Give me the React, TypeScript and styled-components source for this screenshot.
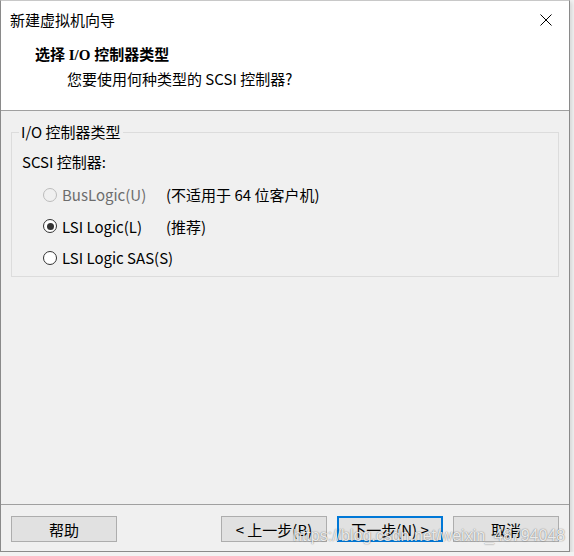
import styled, { createGlobalStyle } from "styled-components";

interface IOption {
    label: string,
    note?: string,
    checked?: boolean,
    disabled?: boolean
}

interface IRadio {
    checked?: boolean;
    disabled?: boolean;
}

const options: IOption[] = [
    { label: "BusLogic(U)", note: "(不适用于 64 位客户机)", disabled: true },
    { label: "LSI Logic(L)", note: "(推荐)", checked: true },
    { label: "LSI Logic SAS(S)" },
];

const GlobalStyle = createGlobalStyle`
    body {
        margin: 0;
        background: #f2f2f2;
        font-family: "Noto Sans CJK SC", "Noto Sans", sans-serif;
        font-size: 15px;
        color: #000;
    }
`;

export default function App() {
    return (
        <>
            <GlobalStyle />
            <Window>
                <TitleBar>
                    <span className="caption">新建虚拟机向导</span>
                    <CloseButton>
                        <svg width="12" height="12" viewBox="0 0 12 12">
                            <path d="M0.5 0.5 L11.5 11.5 M11.5 0.5 L0.5 11.5" stroke="#000" strokeWidth="1" fill="none" />
                        </svg>
                    </CloseButton>
                </TitleBar>
                <Header>
                    <h1 className="heading">选择 I/O 控制器类型</h1>
                    <p className="sub">您要使用何种类型的 SCSI 控制器?</p>
                </Header>
                <Content>
                    <Group>
                        <legend>I/O 控制器类型</legend>
                        <div className="caption">SCSI 控制器:</div>
                        {options.map((item) => (
                            <Row key={item.label} disabled={item.disabled}>
                                <div className="choice">
                                    <Radio checked={item.checked} disabled={item.disabled} />
                                    <span className="label">{item.label}</span>
                                </div>
                                {item.note && <span className="note">{item.note}</span>}
                            </Row>
                        ))}
                    </Group>
                </Content>
                <Footer>
                    <Button>帮助</Button>
                    <div className="right">
                        <Button>&lt; 上一步(B)</Button>
                        <Button primary>下一步(N) &gt;</Button>
                        <Button>取消</Button>
                    </div>
                </Footer>
                <Watermark>https://blog.csdn.net/weixin_48794048</Watermark>
            </Window>
        </>
    );
}

const Window = styled.div`
    position: relative;
    box-sizing: border-box;
    width: 570px;
    height: 552px;
    display: flex;
    flex-direction: column;
    background: #f0f0f0;
    border: 1px solid #8a8a8a;
    border-top-color: #c8c8c8;
    box-shadow: 2px 2px 4px rgba(0, 0, 0, 0.12);
`;

const TitleBar = styled.div`
    height: 38px;
    display: flex;
    align-items: center;
    justify-content: space-between;
    background: #fff;

    .caption {
        padding-left: 9px;
        font-size: 15px;
        line-height: 20px;
    }
`;

const CloseButton = styled.div`
    width: 46px;
    height: 38px;
    display: flex;
    align-items: center;
    justify-content: center;
`;

const Header = styled.div`
    height: 72px;
    box-sizing: border-box;
    padding-top: 6px;
    background: #fff;
    border-bottom: 1px solid #a0a0a0;

    .heading {
        margin: 0 0 4px 34px;
        font-family: "Liberation Serif", "Noto Sans CJK SC", serif;
        font-size: 15px;
        font-weight: 700;
        line-height: 20px;
    }

    .sub {
        margin: 0 0 0 66px;
        font-size: 15px;
        line-height: 20px;
    }
`;

const Content = styled.div`
    flex: 1;
    padding: 11px 10px 0 10px;
`;

const Group = styled.fieldset`
    margin: 0;
    padding: 10px 10px 2px 10px;
    border: 1px solid #dcdcdc;

    legend {
        margin-left: -3px;
        padding: 0 2px;
        line-height: 20px;
    }

    .caption {
        line-height: 20px;
        margin-bottom: 7px;
    }
`;

const Row = styled.div<IRadio>`
    height: 31.5px;
    display: flex;
    align-items: center;

    .choice {
        width: 144px;
        display: flex;
        align-items: center;
        padding-left: 21px;
        box-sizing: border-box;
        flex-shrink: 0;
    }

    .label {
        margin-left: 5px;
        color: ${props => props.disabled ? "#6d6d6d" : "#000"};
        white-space: nowrap;
    }

    .note {
        white-space: nowrap;
    }
`;

const Radio = styled.span<IRadio>`
    position: relative;
    box-sizing: border-box;
    width: 14px;
    height: 14px;
    border-radius: 50%;
    border: 1px solid ${props => props.disabled ? "#bcbcbc" : "#333"};
    background: ${props => props.disabled ? "#f0f0f0" : "#fff"};
    flex-shrink: 0;

    &::after {
        content: "";
        display: ${props => props.checked ? "block" : "none"};
        position: absolute;
        left: 2.5px;
        top: 2.5px;
        width: 7px;
        height: 7px;
        border-radius: 50%;
        background: #333;
    }
`;

const Footer = styled.div`
    height: 47px;
    box-sizing: border-box;
    padding: 11px 10px 0 10px;
    border-top: 1px solid #a0a0a0;
    display: flex;
    justify-content: space-between;
    align-items: flex-start;

    .right {
        display: flex;
        gap: 10px;
    }
`;

const Button = styled.div<{ primary?: boolean }>`
    box-sizing: border-box;
    width: 106px;
    height: 26px;
    display: flex;
    align-items: center;
    justify-content: center;
    background: #e1e1e1;
    border: ${props => props.primary ? "2px solid #0078d7" : "1px solid #adadad"};
    font-size: 15px;
    white-space: nowrap;
`;

const Watermark = styled.div`
    position: absolute;
    left: 292px;
    top: 526px;
    font-family: "Liberation Sans", Arial, sans-serif;
    font-size: 16px;
    line-height: 18px;
    color: rgba(255, 255, 255, 0.85);
    text-shadow: 0 0 1px rgba(0, 0, 0, 0.45), 0 0 2px rgba(0, 0, 0, 0.2);
    pointer-events: none;
    white-space: nowrap;
`;
